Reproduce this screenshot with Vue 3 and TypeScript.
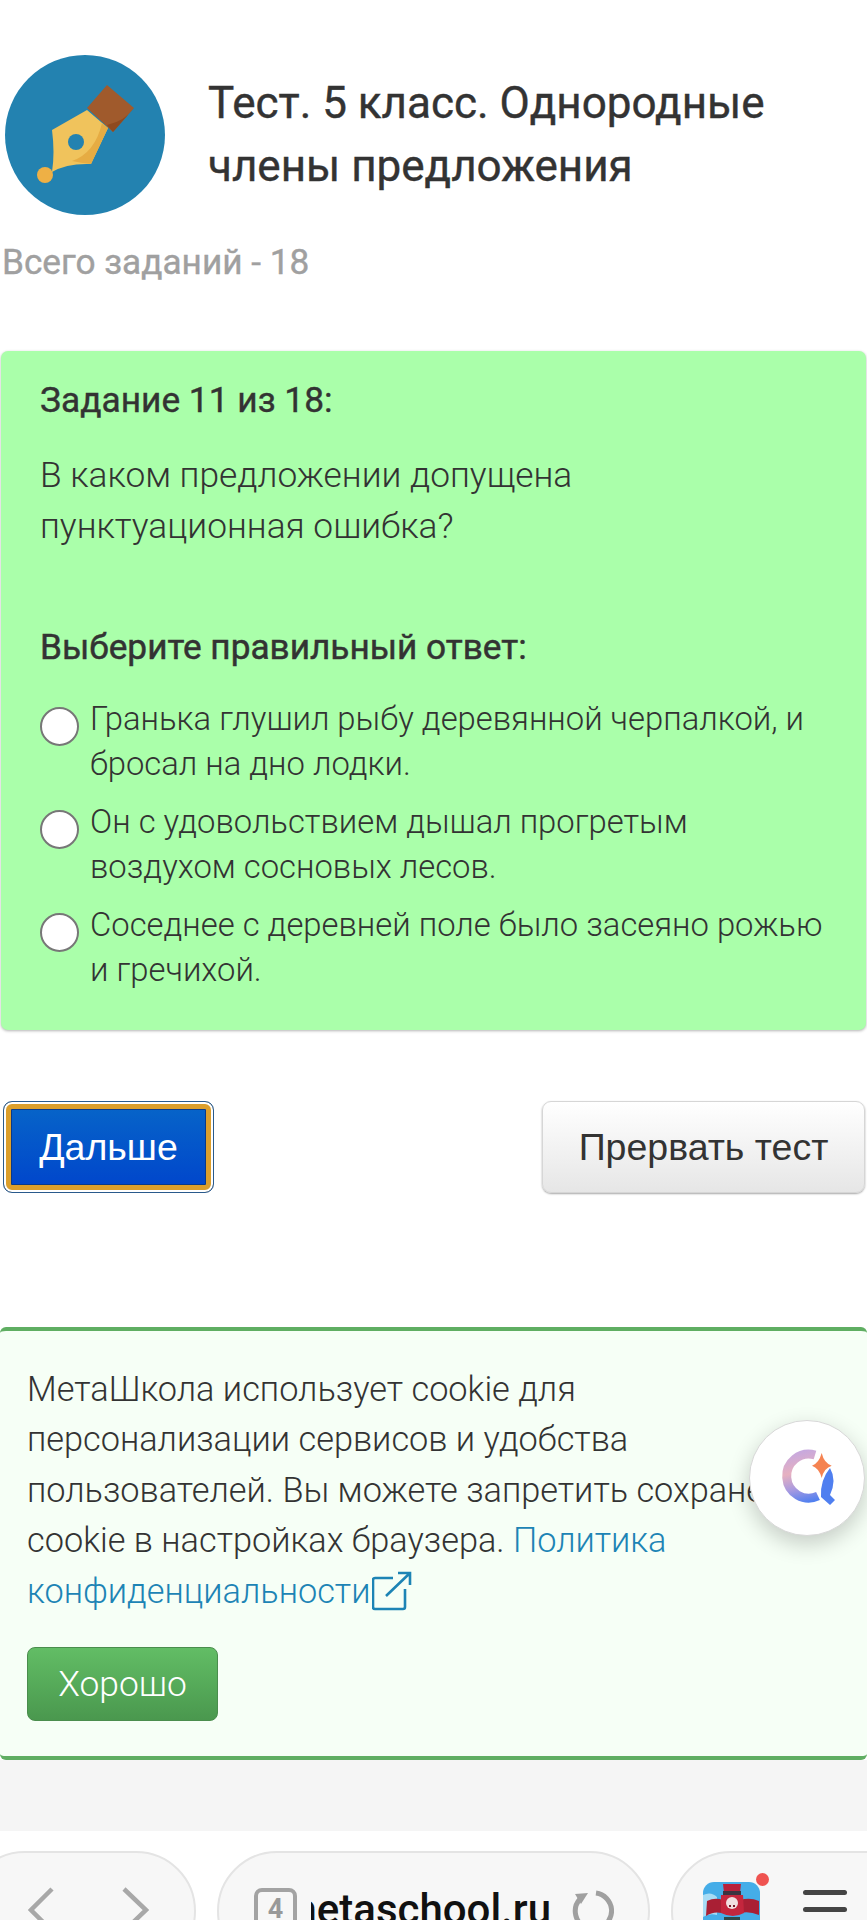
<script setup lang="ts">
const options = [
  'Гранька глушил рыбу деревянной черпалкой, и бросал на дно лодки.',
  'Он с удовольствием дышал прогретым воздухом сосновых лесов.',
  'Соседнее с деревней поле было засеяно рожью и гречихой.',
]
</script>

<template>
  <div class="page">
    <header class="head">
      <svg class="logo" viewBox="0 0 160 160" aria-hidden="true">
        <circle cx="80" cy="80" r="80" fill="#2382b0" />
        <path d="M102 30 L129 53 L108 77 L82 53Z" fill="#a05a2c" />
        <path d="M129 53 L108 77 L102 70 Q120 66 129 53Z" fill="#8f4a1f" />
        <path d="M82 55 L103 73 L86 109 Q62 108 47 117 Q50 98 47 75Z" fill="#f0c35c" />
        <path d="M97 68 L103 73 L86 109 Q76 108 67 106 Q90 98 97 68Z" fill="#e6ac43" />
        <circle cx="71" cy="87" r="8" fill="#2382b0" />
        <circle cx="40" cy="120" r="8" fill="#eeb045" />
      </svg>
      <h1 class="title">Тест. 5 класс. Однородные члены предложения</h1>
    </header>
    <p class="total">Всего заданий - 18</p>

    <section class="card">
      <h2 class="num">Задание 11 из 18:</h2>
      <p class="question">В каком предложении допущена пунктуационная ошибка?</p>
      <h3 class="choose">Выберите правильный ответ:</h3>
      <div class="options">
        <label v-for="o in options" :key="o" class="option">
          <span class="radio"></span>
          <span>{{ o }}</span>
        </label>
      </div>
    </section>

    <div class="actions">
      <button class="btn next">Дальше</button>
      <button class="btn stop">Прервать тест</button>
    </div>

    <section class="cookie">
      <p class="cookie-text">
        МетаШкола использует cookie для<br />
        персонализации сервисов и удобства<br />
        пользователей. Вы можете запретить сохранение<br />
        cookie в настройках браузера.
        <a class="link">Политика<br />
          конфиденциальности<svg class="ext" viewBox="0 0 40 40" fill="none" stroke="#1d84b5" stroke-width="2.6">
            <path d="M21 7H3a2 2 0 0 0-2 2v27a2 2 0 0 0 2 2h28a2 2 0 0 0 2-2V18" />
            <path d="M14 25 L38 2 M26 2 H38 V14" />
          </svg></a>
      </p>
      <button class="ok">Хорошо</button>
    </section>

    <div class="gap"></div>

    <nav class="bar">
      <div class="pill nav">
        <svg width="123" height="50" viewBox="0 0 123 50" fill="none" stroke="#a8a8a8" stroke-width="4.5">
          <path d="M24 2 L3 23 L24 44 M96 2 L118 23 L96 44" />
        </svg>
      </div>
      <div class="pill addr">
        <span class="tabs">4</span>
        <span class="url"><span>metaschool.ru</span></span>
        <svg class="reload" width="42" height="40" viewBox="0 0 42 40" fill="none" stroke="#a0a0a0" stroke-width="5">
          <path d="M24 3 A18 18 0 0 1 27 38 M15 38 A18 18 0 0 1 8 9" />
          <path d="M3 4 L16 3 L9 14Z" fill="#a0a0a0" stroke="none" />
        </svg>
      </div>
      <div class="pill menu">
        <svg class="pirate" width="57" height="42" viewBox="0 0 57 42">
          <path d="M0 42V12A11 11 0 0 1 11 1H46A11 11 0 0 1 57 12V42Z" fill="#45ade8" />
          <path d="M0 14 Q8 10 14 16 L14 34 Q6 32 0 36Z" fill="#a7dcf5" />
          <path d="M20 3 H38 L37 12 H21Z" fill="#b8213a" />
          <path d="M20 10 H38 V14 H20Z" fill="#3c3340" />
          <path d="M4 20 Q12 16 20 19 L19 32 Q10 30 3 35Z" fill="#a91f34" />
          <path d="M37 19 Q47 16 56 20 V34 Q46 30 38 32Z" fill="#a91f34" />
          <path d="M18 14 H40 L41 32 Q30 38 18 32Z" fill="#c4263d" />
          <circle cx="29" cy="22" r="6" fill="#f0dfe0" />
          <path d="M26 24 h2 v2 h-2z M30 24 h2 v2 h-2z" fill="#7a1a2a" />
          <path d="M21 36 H37 V42 H21Z" fill="#2f4a4a" />
        </svg>
        <span class="dot"></span>
        <span class="lines"><i></i><i></i></span>
      </div>
    </nav>

    <button class="assist">
      <svg width="116" height="116" viewBox="0 0 116 116" fill="none">
        <defs>
          <linearGradient id="ring" gradientUnits="userSpaceOnUse" x1="50" y1="30" x2="62" y2="82">
            <stop offset="0" stop-color="#c5a8e0" />
            <stop offset="0.4" stop-color="#e6b0c0" />
            <stop offset="0.7" stop-color="#a89ae0" />
            <stop offset="1" stop-color="#4f7ff0" />
          </linearGradient>
        </defs>
        <path d="M66 35 A22 22 0 1 0 69 76" stroke="url(#ring)" stroke-width="9" />
        <path d="M81 48 Q88 60 81 75 L86 80 L81 85 L72 77 Q71 60 81 48Z" fill="#4f7ff0" />
        <path d="M72.7 33 Q75 43 82.7 45.7 Q75 48 72.7 58 Q70 48 63 45.7 Q70 43 72.7 33Z" fill="#f58352" />
      </svg>
    </button>
  </div>
</template>

<style>
body { margin: 0; background: #fff; }
</style>

<style scoped>
.page {
  position: relative;
  width: 867px;
  height: 1920px;
  overflow: hidden;
  background: #fff;
  font-family: Roboto, sans-serif;
  color: #333;
}
.head {
  display: flex;
  align-items: center;
  gap: 43px;
  padding: 55px 0 0 5px;
}
.logo {
  width: 160px;
  height: 160px;
  flex: none;
}
.title {
  margin: -1px 0 0;
  font-size: 44px;
  line-height: 63px;
  font-weight: 400;
  width: 620px;
  -webkit-text-stroke: 0.4px #333;
}
.total {
  margin: 25px 0 0 2px;
  font-size: 35.2px;
  line-height: 44px;
  font-weight: 400;
  color: #a0a0a0;
  -webkit-text-stroke: 0.4px #a0a0a0;
}
.card {
  margin: 67px 1px 0;
  height: 679px;
  box-sizing: border-box;
  padding: 27px 35px 0 39px;
  background: #aaffaa;
  border-radius: 7px;
  box-shadow: 0 1px 3px rgba(0, 0, 0, 0.3);
}
.num {
  margin: 0;
  font-size: 35.3px;
  line-height: 44px;
  font-weight: 400;
  -webkit-text-stroke: 0.4px #333;
}
.question {
  margin: 28px 0 0;
  font-size: 35.3px;
  line-height: 51px;
  font-weight: 300;
  width: 620px;
}
.choose {
  margin: 73px 0 0;
  font-size: 35.2px;
  line-height: 44px;
  font-weight: 400;
  -webkit-text-stroke: 0.5px #333;
}
.options {
  display: flex;
  flex-direction: column;
  gap: 13px;
  margin-top: 28px;
}
.option {
  display: flex;
  gap: 11px;
  font-size: 32.8px;
  line-height: 45px;
  font-weight: 300;
}
.radio {
  flex: none;
  width: 35px;
  height: 35px;
  margin-top: 10px;
  border: 2px solid #777;
  border-radius: 50%;
  background: #fff;
}
.actions {
  display: flex;
  justify-content: space-between;
  margin: 71px 2px 0 3px;
}
.btn {
  height: 92px;
  font-family: "Liberation Sans", sans-serif;
  font-size: 37.5px;
  border-radius: 9px;
  box-sizing: border-box;
}
.next {
  width: 211px;
  color: #fff;
  border: 1px solid #2a5a8c;
  background: linear-gradient(#0766c8, #0044cc);
  box-shadow: inset 0 0 0 2px #fff, inset 0 0 0 7px #dc9f2c, inset 0 0 0 8px #0a3a8a;
}
.stop {
  width: 323px;
  color: #333;
  border: 1px solid #d6d6d6;
  background: linear-gradient(#fff, #e6e6e6);
  box-shadow: 0 1px 2px rgba(0, 0, 0, 0.35);
}
.cookie {
  margin-top: 134px;
  height: 433px;
  box-sizing: border-box;
  padding: 33px 0 0 27px;
  background: #f6fff6;
  border-top: 4px solid #5fae62;
  border-bottom: 4px solid #5fae62;
  border-radius: 6px;
}
.cookie-text {
  margin: 0;
  font-size: 34.3px;
  line-height: 50.4px;
  font-weight: 300;
  white-space: nowrap;
}
.link {
  color: #1d84b5;
}
.ext {
  width: 40px;
  height: 40px;
  vertical-align: -8px;
  margin-left: 2px;
}
.ok {
  display: block;
  width: 191px;
  height: 74px;
  margin-top: 31px;
  font-family: Roboto, sans-serif;
  font-size: 35.4px;
  font-weight: 300;
  color: #fff;
  border: 1px solid #4a8d4d;
  border-radius: 8px;
  background: linear-gradient(#62bd65, #4a984e);
}
.gap {
  height: 71px;
  background: #f5f5f5;
}
.bar {
  display: flex;
  gap: 21px;
  margin: 20px 0 0 -35px;
}
.pill {
  position: relative;
  flex: none;
  height: 120px;
  box-sizing: border-box;
  background: #f7f7f7;
  border: 2px solid #e4e4e4;
  border-radius: 60px;
}
.nav {
  width: 231px;
  padding: 34px 0 0 61px;
}
.nav svg {
  display: block;
}
.addr {
  width: 433px;
  display: flex;
  padding: 35px 0 0 35px;
  align-items: flex-start;
}
.tabs {
  flex: none;
  width: 43px;
  height: 60px;
  box-sizing: border-box;
  border: 4px solid #a3a3a3;
  border-radius: 8px;
  color: #999;
  font-size: 27px;
  font-weight: 700;
  line-height: 34px;
  text-align: center;
}
.url {
  flex: none;
  width: 240px;
  margin: 0 0 0 14px;
  overflow: hidden;
  display: flex;
  justify-content: flex-end;
  font-size: 42px;
  line-height: 44px;
  font-weight: 500;
  color: #111;
  white-space: nowrap;
}
.reload {
  flex: none;
  margin: 2px 0 0 21px;
}
.menu {
  width: 260px;
  display: flex;
  align-items: flex-start;
  padding: 28px 0 0 30px;
}
.pirate {
  flex: none;
}
.dot {
  position: absolute;
  left: 83px;
  top: 20px;
  width: 13px;
  height: 13px;
  border-radius: 50%;
  background: #ef5350;
}
.lines {
  display: flex;
  flex-direction: column;
  gap: 12px;
  margin: 9px 0 0 43px;
}
.lines i {
  display: block;
  width: 44px;
  height: 5px;
  border-radius: 3px;
  background: #444;
}
.assist {
  position: absolute;
  left: 749px;
  top: 1420px;
  width: 116px;
  height: 116px;
  padding: 0;
  background: #fff;
  border: 1px solid #d8d8d8;
  border-radius: 50%;
  box-shadow: 0 8px 22px rgba(0, 0, 0, 0.2);
}
.assist svg {
  display: block;
  margin: -1px;
}
</style>
